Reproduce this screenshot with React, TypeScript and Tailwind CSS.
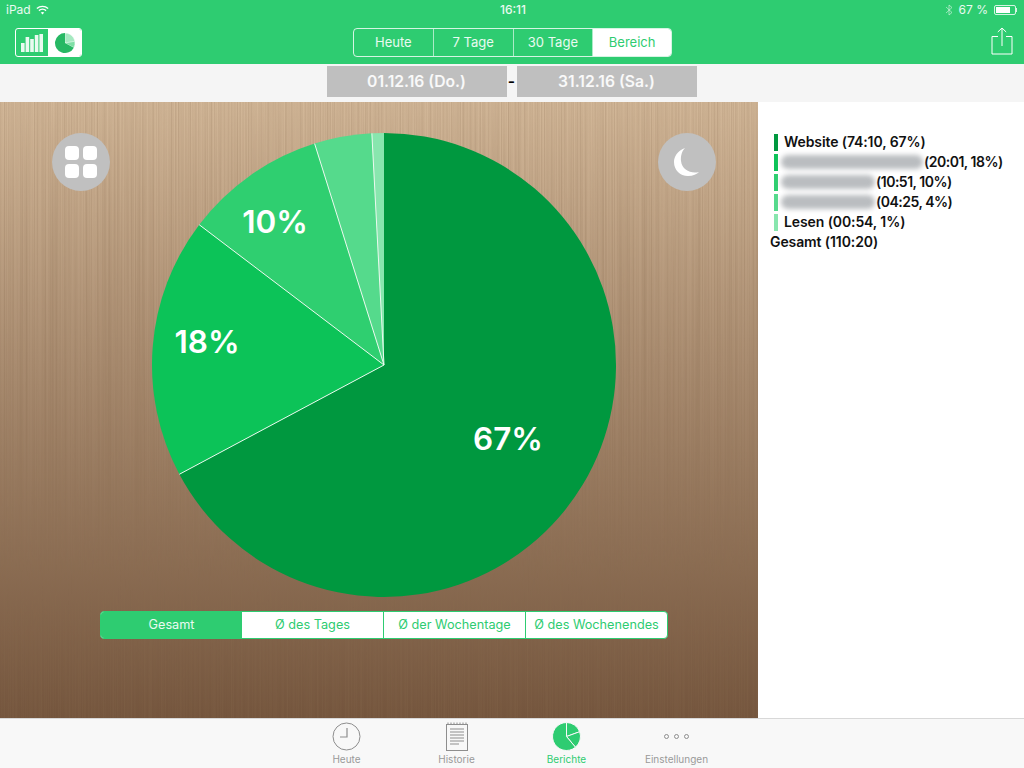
const green = "#2ecc71";

interface Slice {
  from: number;
  to: number;
  color: string;
}

const slices: Slice[] = [
  { from: 0, to: 241.9, color: "#00983f" },
  { from: 241.9, to: 307.2, color: "#0cc358" },
  { from: 307.2, to: 342.6, color: "#2fcf70" },
  { from: 342.6, to: 357, color: "#55da8c" },
  { from: 357, to: 360, color: "#88e6ae" },
];

function polar(cx: number, cy: number, r: number, deg: number) {
  const a = (deg * Math.PI) / 180;
  return [cx + r * Math.sin(a), cy - r * Math.cos(a)];
}

function slicePath(cx: number, cy: number, r: number, from: number, to: number) {
  const [x1, y1] = polar(cx, cy, r, from);
  const [x2, y2] = polar(cx, cy, r, to);
  const large = to - from > 180 ? 1 : 0;
  return `M${cx} ${cy}L${x1} ${y1}A${r} ${r} 0 ${large} 1 ${x2} ${y2}Z`;
}

function StatusBar() {
  return (
    <div className="grid h-5 grid-cols-3 items-center px-[6px] text-[12px] text-white/90">
      <div className="flex items-center gap-[5px]">
        <span>iPad</span>
        <svg width="13" height="10" viewBox="0 0 12 9" fill="none" stroke="white" strokeWidth="1.3">
          <path d="M.8 3.2C3.8.5 8.2.5 11.2 3.2" />
          <path d="M2.7 5.1C4.6 3.5 7.4 3.5 9.3 5.1" />
          <path d="M6 8.6L4.4 6.9C5.4 6.2 6.6 6.2 7.6 6.9Z" fill="white" stroke="none" />
        </svg>
      </div>
      <div className="pl-[2px] text-center font-medium">16:11</div>
      <div className="flex items-center justify-end gap-[6px] pr-[1px]">
        <svg width="8" height="12" viewBox="0 0 8 12" fill="none" stroke="white" strokeOpacity="0.5" strokeWidth="1">
          <path d="M1 3l6 5.5L4 11V1l3 2.5L1 9" />
        </svg>
        <span>67 %</span>
        <div className="flex items-center">
          <div className="h-[10px] w-[22px] rounded-[2px] border border-white/80 p-[1px]">
            <div className="h-full w-[14px] bg-white" />
          </div>
          <div className="h-[4px] w-[1px] bg-white/80" />
        </div>
      </div>
    </div>
  );
}

function ChartToggle() {
  return (
    <div className="flex h-[29px] w-[67px] overflow-hidden rounded-[3px] border border-white">
      <div className="flex w-[32px] items-center justify-center">
        <svg width="22" height="19" viewBox="0 0 22 19" fill="white">
          <rect x="0" y="10" width="3.6" height="9" opacity="0.9" />
          <rect x="4.6" y="4" width="3.6" height="15" opacity="0.9" />
          <rect x="9.2" y="6" width="3.6" height="13" opacity="0.9" />
          <rect x="13.8" y="2" width="3.6" height="17" opacity="0.9" />
          <rect x="18.4" y="1" width="3.6" height="18" opacity="0.9" />
        </svg>
      </div>
      <div className="flex flex-1 items-center justify-center bg-white">
        <svg width="22" height="22" viewBox="0 0 22 22">
          <path d={slicePath(11, 11, 10, 0, 118)} fill="#a6e9c1" stroke="white" strokeWidth="0.5" />
          <path d={slicePath(11, 11, 10, 80, 118)} fill="#7fdfa6" stroke="white" strokeWidth="0.5" />
          <path d={slicePath(11, 11, 10, 118, 360)} fill="#27b864" />
        </svg>
      </div>
    </div>
  );
}

function RangeTabs() {
  const tabs = ["Heute", "7 Tage", "30 Tage"];
  return (
    <div className="-ml-[3px] flex h-[29px] w-[319px] overflow-hidden rounded-[4px] border border-white/80 text-[13px] text-white/90">
      {tabs.map((t) => (
        <div key={t} className="flex w-[79.75px] items-center justify-center border-r border-white/60">
          {t}
        </div>
      ))}
      <div className="flex flex-1 items-center justify-center bg-white text-[#2ecc71]">Bereich</div>
    </div>
  );
}

function Header() {
  return (
    <div className="bg-[#2ecc71]">
      <StatusBar />
      <div className="flex h-[44px] items-start pl-[15px] pr-[11px] pt-[8px]">
        <div className="flex-1">
          <ChartToggle />
        </div>
        <RangeTabs />
        <div className="flex flex-1 justify-end">
          <svg width="22" height="28" viewBox="0 0 22 28" fill="none" stroke="white" strokeWidth="1" className="-mt-[1px]">
            <path d="M7 9.5H1V27H21V9.5H15" />
            <path d="M11 19V1M6.8 5L11 1l4.2 4" />
          </svg>
        </div>
      </div>
    </div>
  );
}

function DateBar() {
  return (
    <div className="flex h-[38px] items-start justify-center bg-[#f5f5f5] pt-[2px] pr-[1px] text-[15.7px] font-semibold text-white/90">
      <div className="flex h-[31px] w-[180px] items-center justify-center bg-[#bfbfbf]">01.12.16 (Do.)</div>
      <div className="flex h-[31px] w-[10px] items-center justify-center text-black">-</div>
      <div className="flex h-[31px] w-[180px] items-center justify-center bg-[#bfbfbf]">31.12.16 (Sa.)</div>
    </div>
  );
}

function WoodTexture() {
  return (
    <svg className="absolute inset-0 h-full w-full" preserveAspectRatio="none">
      <filter id="wood" x="0" y="0" width="100%" height="100%">
        <feTurbulence type="fractalNoise" baseFrequency="0.7 0.002" numOctaves="2" seed="4" />
        <feColorMatrix values="0 0 0 0 0.25  0 0 0 0 0.15  0 0 0 0 0.08  1.2 0 0 0 -0.42" />
      </filter>
      <rect width="100%" height="100%" filter="url(#wood)" opacity="0.5" />
    </svg>
  );
}

function Pie() {
  const cx = 233;
  const cy = 233;
  const r = 232;
  return (
    <svg width="466" height="466" viewBox="0 0 466 466" className="relative">
      {slices.map((s) => (
        <path key={s.from} d={slicePath(cx, cy, r, s.from, s.to)} fill={s.color} />
      ))}
      {slices.slice(1).map((s) => {
        const [x, y] = polar(cx, cy, r, s.from);
        return <line key={s.from} x1={cx} y1={cy} x2={x} y2={y} stroke="#e9fbf0" strokeWidth="1" />;
      })}
      <g fill="white" fontSize="31.5" fontWeight="600" textAnchor="middle">
        <text x="357" y="318">67%</text>
        <text x="56" y="221">18%</text>
        <text x="124" y="101">10%</text>
      </g>
    </svg>
  );
}

function ModeTabs() {
  const tabs = ["Ø des Tages", "Ø der Wochentage", "Ø des Wochenendes"];
  return (
    <div className="relative flex h-[28px] w-[568px] overflow-hidden rounded-[4px] border border-[#2ecc71] bg-white text-[12.7px] text-[#2ecc71]">
      <div className="flex w-[141px] items-center justify-center bg-[#2ecc71] text-white/90">Gesamt</div>
      {tabs.map((t, i) => (
        <div key={t} className={`flex flex-1 items-center justify-center ${i < 2 ? "border-r border-[#2ecc71]" : ""}`}>
          {t}
        </div>
      ))}
    </div>
  );
}

function ChartArea() {
  return (
    <div className="relative flex w-[758px] flex-col items-center overflow-hidden bg-linear-to-b from-[#d2b798] to-[#74553d] pt-[30px] pl-[10px]">
      <WoodTexture />
      <div className="absolute left-[52px] top-[31px] flex h-[58px] w-[58px] items-center justify-center rounded-full bg-[#c0c0c0]">
        <div className="grid grid-cols-2 gap-[4px]">
          <div className="h-[14px] w-[14px] rounded-[4px] bg-white" />
          <div className="h-[14px] w-[14px] rounded-[4px] bg-white" />
          <div className="h-[14px] w-[14px] rounded-[4px] bg-white" />
          <div className="h-[14px] w-[14px] rounded-[4px] bg-white" />
        </div>
      </div>
      <div className="absolute left-[658px] top-[31px] flex h-[58px] w-[58px] items-center justify-center rounded-full bg-[#c0c0c0]">
        <svg width="26" height="28" viewBox="0 0 26 28" fill="white">
          <path d="M11 0C3 3 0 9 0 14C0 22 6 28 14 28C19 28 23 26 25 24C17 26 8 22 7 13C6.5 8 8 3 11 0Z" />
        </svg>
      </div>
      <Pie />
      <div className="relative mt-[13px]">
        <ModeTabs />
      </div>
    </div>
  );
}

function Blur({ width }: { width: number }) {
  return <div className="h-[14px] rounded-full bg-[#babdc0] blur-[2.5px]" style={{ width }} />;
}

function Legend() {
  const rows = [
    { color: "#00983f", blur: 0, text: "Website (74:10, 67%)" },
    { color: "#0cc358", blur: 142, text: "(20:01, 18%)" },
    { color: "#2fcf70", blur: 94, text: "(10:51, 10%)" },
    { color: "#55da8c", blur: 94, text: "(04:25, 4%)" },
    { color: "#88e6ae", blur: 0, text: "Lesen (00:54, 1%)" },
  ];
  return (
    <div className="flex-1 bg-white pl-[12px] pt-[30px] text-[14px] font-semibold leading-[20px] tracking-[-0.1px] text-[#111]">
      {rows.map((r) => (
        <div key={r.text} className="flex h-[20px] items-center">
          <div className="ml-[4px] h-[17px] w-[4px]" style={{ backgroundColor: r.color }} />
          {r.blur > 0 ? (
            <div className="ml-[3px] flex items-center">
              <Blur width={r.blur} />
              <span className="ml-[1px] tracking-[-0.5px]">{r.text}</span>
            </div>
          ) : (
            <span className="ml-[6px]">{r.text}</span>
          )}
        </div>
      ))}
      <div>Gesamt (110:20)</div>
    </div>
  );
}

function TabBar() {
  return (
    <div className="flex h-[50px] justify-center border-t border-[#d8d8d8] bg-[#f8f8f8] pr-[1px] text-[10px] text-[#9a9a9a]">
      <div className="flex w-[110px] flex-col items-center pt-[3px]">
        <svg width="29" height="29" viewBox="0 0 29 29" fill="none" stroke="#8e8e8e" strokeWidth="1">
          <circle cx="14.5" cy="14.5" r="13.5" />
          <path d="M15 6V15H8" strokeWidth="1.2" />
        </svg>
        <span className="mt-[1px]">Heute</span>
      </div>
      <div className="flex w-[110px] flex-col items-center pt-[3px]">
        <svg width="22" height="29" viewBox="0 0 22 29" fill="none" stroke="#8e8e8e" strokeWidth="1">
          <rect x="0.5" y="2.5" width="21" height="26" />
          <path d="M4 7H18M4 10H18M4 13H18M4 16H18M4 19H18M4 22H13" />
          <path d="M2 2V.5M5 2V.5M8 2V.5M11 2V.5M14 2V.5M17 2V.5M20 2V.5" />
        </svg>
        <span className="mt-[1px]">Historie</span>
      </div>
      <div className="flex w-[110px] flex-col items-center pt-[3px] text-[#2ecc71]">
        <svg width="29" height="29" viewBox="0 0 29 29" fill={green} stroke="#f8f8f8" strokeWidth="1">
          <path d={slicePath(14.5, 14.5, 14, 0, 70)} />
          <path d={slicePath(14.5, 14.5, 14, 70, 140)} />
          <path d={slicePath(14.5, 14.5, 14, 140, 360)} />
        </svg>
        <span className="mt-[1px]">Berichte</span>
      </div>
      <div className="flex w-[110px] flex-col items-center pt-[3px]">
        <div className="flex h-[29px] items-center gap-[5px]">
          <div className="h-[5px] w-[5px] rounded-full border border-[#8e8e8e]" />
          <div className="h-[5px] w-[5px] rounded-full border border-[#8e8e8e]" />
          <div className="h-[5px] w-[5px] rounded-full border border-[#8e8e8e]" />
        </div>
        <span className="mt-[1px]">Einstellungen</span>
      </div>
    </div>
  );
}

export default function App() {
  return (
    <div className="flex h-[768px] w-[1024px] flex-col overflow-hidden font-['Inter',sans-serif]">
      <Header />
      <DateBar />
      <div className="flex flex-1">
        <ChartArea />
        <Legend />
      </div>
      <TabBar />
    </div>
  );
}
